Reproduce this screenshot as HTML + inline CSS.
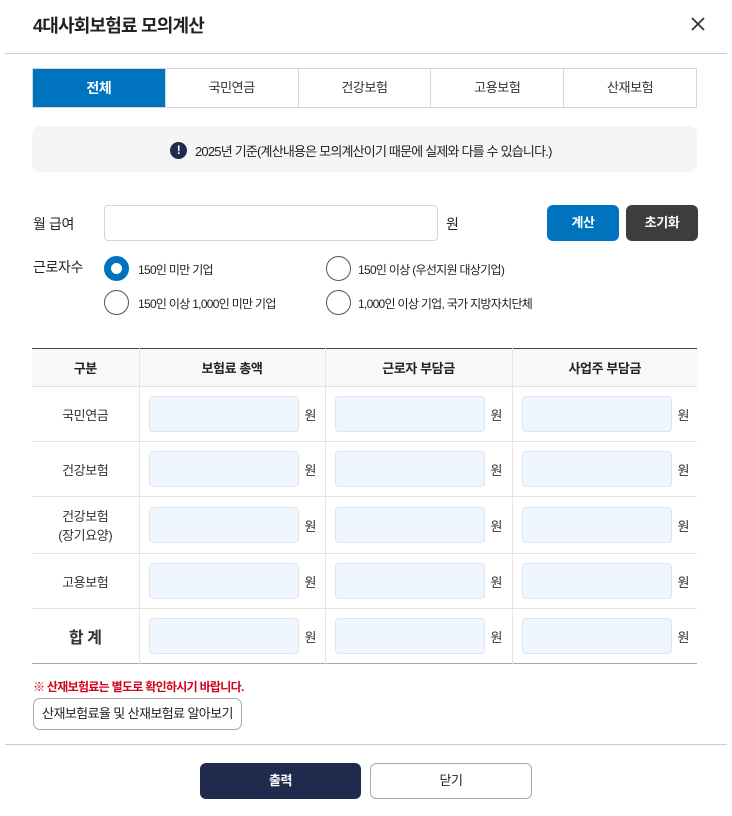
<!DOCTYPE html>
<html><head><meta charset="utf-8"><style>
*{box-sizing:border-box;margin:0;padding:0}
body{width:732px;height:816px;background:#fff;font-family:"Liberation Sans","Noto Sans CJK KR",sans-serif;color:#222;position:relative;overflow:hidden;font-size:13px;letter-spacing:-0.4px}
.a{position:absolute}
.tabs{left:32px;top:68px;width:665px;height:40px;display:flex;border:1px solid #d6d6d6}
.tabs div{flex:1;text-align:center;line-height:38px;font-size:13px;color:#333;border-left:1px solid #d6d6d6}
.tabs div:first-child{border-left:none;background:#0073be;color:#fff;font-weight:bold;font-size:14px}
.radio{width:25px;height:25px;border:1px solid #555;border-radius:50%}
.radio.on{border:7px solid #0073be}
.rl{font-size:12px;color:#222;letter-spacing:-0.7px}
table{position:absolute;left:32px;top:348px;width:665px;border-collapse:collapse;border-top:1px solid #444;border-bottom:1px solid #aaa}
th{height:38px;background:#f7f8fa;font-size:13px;font-weight:bold;border-left:1px solid #e5e5e5}
td{border-top:1px solid #e2e2e2;border-left:1px solid #e5e5e5;text-align:center;font-size:13px;color:#333}
th:first-child,td:first-child{border-left:none}
.c{display:flex;align-items:center;padding-left:9px}
.in{width:150px;height:36px;background:#eff6fe;border:1px solid #dce6ef;border-radius:4px}
.w{margin-left:6px;font-size:13px}
</style></head><body>
<div class="a" style="left:33px;top:12px;font-size:18px;font-weight:bold;letter-spacing:-0.8px">4대사회보험료 모의계산</div>
<svg class="a" style="left:690px;top:16px" width="16" height="16"><path d="M2 2L14 14M14 2L2 14" stroke="#333" stroke-width="1.8"/></svg>
<div class="a" style="left:5px;top:53px;width:722px;height:1px;background:#ccc"></div>
<div class="a tabs"><div>전체</div><div>국민연금</div><div>건강보험</div><div>고용보험</div><div>산재보험</div></div>
<div class="a" style="left:32px;top:126px;width:665px;height:46px;background:#f5f5f5;border-radius:8px"></div>
<div class="a" style="left:170px;top:142px;width:17px;height:17px;border-radius:50%;background:#1f2b4d;color:#fff;font-size:12px;font-weight:bold;text-align:center;line-height:17px">!</div>
<div class="a" style="left:195px;top:141px;font-size:13px;letter-spacing:-0.8px">2025년 기준(계산내용은 모의계산이기 때문에 실제와 다를 수 있습니다.)</div>
<div class="a" style="left:33px;top:214px;font-size:14px">월 급여</div>
<div class="a" style="left:104px;top:205px;width:334px;height:36px;border:1px solid #d6d6d6;border-radius:4px"></div>
<div class="a" style="left:446px;top:214px;font-size:14px">원</div>
<div class="a" style="left:547px;top:205px;width:72px;height:36px;background:#0073be;color:#fff;border-radius:6px;text-align:center;line-height:36px;font-weight:bold;font-size:13px">계산</div>
<div class="a" style="left:626px;top:205px;width:72px;height:36px;background:#3d3d3d;color:#fff;border-radius:6px;text-align:center;line-height:36px;font-weight:bold;font-size:13px">초기화</div>
<div class="a" style="left:33px;top:257px;font-size:14px">근로자수</div>
<div class="a radio on" style="left:104px;top:256px"></div><div class="a rl" style="left:138px;top:261px">150인 미만 기업</div>
<div class="a radio" style="left:326px;top:256px"></div><div class="a rl" style="left:358px;top:261px">150인 이상 (우선지원 대상기업)</div>
<div class="a radio" style="left:104px;top:290px"></div><div class="a rl" style="left:138px;top:295px">150인 이상 1,000인 미만 기업</div>
<div class="a radio" style="left:326px;top:290px"></div><div class="a rl" style="left:358px;top:295px">1,000인 이상 기업, 국가 지방자치단체</div>
<table>
<tr><th style="width:107px">구분</th><th style="width:186px">보험료 총액</th><th style="width:187px">근로자 부담금</th><th>사업주 부담금</th></tr>
<tr style="height:55px"><td>국민연금</td><td><div class="c"><div class="in"></div><span class="w">원</span></div></td><td><div class="c"><div class="in"></div><span class="w">원</span></div></td><td><div class="c"><div class="in"></div><span class="w">원</span></div></td></tr>
<tr style="height:55px"><td>건강보험</td><td><div class="c"><div class="in"></div><span class="w">원</span></div></td><td><div class="c"><div class="in"></div><span class="w">원</span></div></td><td><div class="c"><div class="in"></div><span class="w">원</span></div></td></tr>
<tr style="height:57px"><td>건강보험<br>(장기요양)</td><td><div class="c"><div class="in"></div><span class="w">원</span></div></td><td><div class="c"><div class="in"></div><span class="w">원</span></div></td><td><div class="c"><div class="in"></div><span class="w">원</span></div></td></tr>
<tr style="height:55px"><td>고용보험</td><td><div class="c"><div class="in"></div><span class="w">원</span></div></td><td><div class="c"><div class="in"></div><span class="w">원</span></div></td><td><div class="c"><div class="in"></div><span class="w">원</span></div></td></tr>
<tr style="height:55px"><td style="font-size:16px;font-weight:bold">합 계</td><td><div class="c"><div class="in"></div><span class="w">원</span></div></td><td><div class="c"><div class="in"></div><span class="w">원</span></div></td><td><div class="c"><div class="in"></div><span class="w">원</span></div></td></tr>
</table>
<div class="a" style="left:33px;top:678px;font-size:12px;font-weight:bold;color:#d0021b;letter-spacing:-0.7px">※ 산재보험료는 별도로 확인하시기 바랍니다.</div>
<div class="a" style="left:33px;top:698px;width:209px;height:32px;border:1px solid #aaa;border-radius:7px;text-align:center;line-height:30px;font-size:13px;letter-spacing:-0.6px">산재보험료율 및 산재보험료 알아보기</div>
<div class="a" style="left:5px;top:744px;width:722px;height:1px;background:#ccc"></div>
<div class="a" style="left:200px;top:763px;width:161px;height:36px;background:#1f2b4d;color:#fff;border-radius:6px;text-align:center;line-height:36px;font-weight:bold;font-size:13px">출력</div>
<div class="a" style="left:370px;top:763px;width:162px;height:36px;border:1px solid #aaa;border-radius:6px;text-align:center;line-height:34px;font-size:13px">닫기</div>
</body></html>
